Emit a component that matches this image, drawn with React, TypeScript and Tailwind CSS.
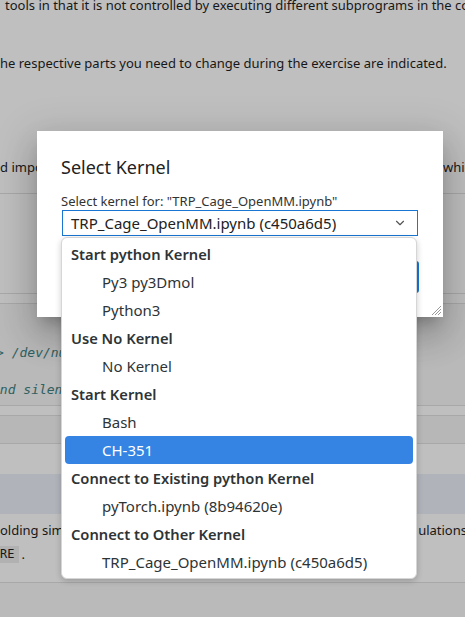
import { ChevronDown } from 'lucide-react';

interface KernelRow {
  label: string;
  header?: boolean;
  active?: boolean;
}

const rows: KernelRow[] = [
  { label: 'Start python Kernel', header: true },
  { label: 'Py3 py3Dmol' },
  { label: 'Python3' },
  { label: 'Use No Kernel', header: true },
  { label: 'No Kernel' },
  { label: 'Start Kernel', header: true },
  { label: 'Bash' },
  { label: 'CH-351', active: true },
  { label: 'Connect to Existing python Kernel', header: true },
  { label: 'pyTorch.ipynb (8b94620e)' },
  { label: 'Connect to Other Kernel', header: true },
  { label: 'TRP_Cage_OpenMM.ipynb (c450a6d5)' },
];

function NotebookBackdrop() {
  return (
    <div className="flex flex-col text-[13px] leading-[20px] text-[#1f1f1f]">
      {/* markdown cell */}
      <div className="h-[194px] shrink-0 border-b border-[#e0e0e0] bg-white">
        <p className="-mt-[5px] whitespace-nowrap pl-[5px]">
          tools in that it is not controlled by executing different subprograms in the command line
        </p>
        <p className="mt-[38px] whitespace-nowrap">
          he respective parts you need to change during the exercise are indicated.
        </p>
        <div className="mt-[84px] flex whitespace-nowrap">
          <span className="w-[37px] overflow-hidden">d important</span>
          <span className="ml-auto w-[22px] overflow-hidden">which</span>
        </div>
      </div>

      <div className="h-[100px] shrink-0 border-b border-[#e0e0e0] bg-white" />
      <div className="h-[10px] shrink-0 border-b border-[#e0e0e0] bg-white" />

      {/* code cell */}
      <div className="h-[102px] shrink-0 border-b border-[#e0e0e0] bg-[#f7f7f7] font-['DejaVu_Sans_Mono',monospace] text-[13px] leading-[17px] italic text-[#408080]">
        <p className="-ml-[4px] mt-[40px] w-[65px] overflow-hidden whitespace-nowrap">&gt; /dev/null</p>
        <p className="-ml-[8px] mt-[20px] w-[69px] overflow-hidden whitespace-nowrap">and silently</p>
      </div>

      <div className="h-[10px] shrink-0 border-b border-[#e0e0e0] bg-white" />
      <div className="h-[28px] shrink-0 border-b border-[#e0e0e0] bg-[#f5f5f5]" />
      <div className="h-[30px] shrink-0 bg-white" />
      <div className="h-[40px] shrink-0 bg-[#ebeff8]" />

      {/* markdown cell */}
      <div className="h-[69px] shrink-0 border-b border-[#e0e0e0] bg-white">
        <div className="mt-[6px] flex whitespace-nowrap">
          <span className="w-[61px] overflow-hidden">olding simulations</span>
          <span className="-mr-[2px] ml-auto">ulations</span>
        </div>
        <p className="mt-[4px] flex items-center whitespace-nowrap">
          <code className="bg-[#ececec] pr-[5px] font-['DejaVu_Sans_Mono',monospace] text-[12px] leading-[17px]">
            RE
          </code>
          <span className="ml-[2px]">.</span>
        </p>
      </div>
      <div className="h-[40px] shrink-0 bg-[#f8f8f8]" />
    </div>
  );
}

function KernelDialog() {
  return (
    <div className="absolute left-[37px] top-[131px] w-[406px] bg-white px-[24px] pb-[24px] pt-[24px] text-[#222] shadow-[0_10px_13px_-6px_rgba(0,0,0,0.2),0_20px_31px_3px_rgba(0,0,0,0.14),0_8px_38px_7px_rgba(0,0,0,0.12)]">
      <h2 className="text-[18px] leading-[24px] font-normal">Select Kernel</h2>
      <label className="mt-[13px] block text-[13px] leading-[18px] text-[#333]">
        Select kernel for: "TRP_Cage_OpenMM.ipynb"
      </label>
      <div className="ml-px flex h-[26px] w-[356px] items-center border border-[#1976d2] pl-[8px] pr-[10px]">
        <span className="flex-1 text-[15px] leading-[24px] text-[#222]">
          TRP_Cage_OpenMM.ipynb (c450a6d5)
        </span>
        <ChevronDown className="h-[14px] w-[14px] text-[#555]" strokeWidth={2} />
      </div>
      <div className="mt-[25px] flex justify-end gap-[12px]">
        <button className="h-[32px] w-[80px] rounded-[3px] bg-[#757575] text-[13px] text-white">Cancel</button>
        <button className="h-[32px] w-[80px] rounded-[3px] bg-[#1976d2] text-[13px] text-white">Select</button>
      </div>
      {/* resize grip */}
      <svg className="absolute bottom-[1px] right-[1px]" width="11" height="11" viewBox="0 0 11 11">
        <path d="M10 1 L1 10 M10 4 L4 10 M10 7 L7 10" stroke="#9a9a9a" strokeWidth="1" />
      </svg>
    </div>
  );
}

function KernelMenu() {
  return (
    <div className="absolute left-[61px] top-[237px] w-[356px] rounded-[6px] border border-[#d6d6d6] bg-white py-[2px] shadow-[0_2px_6px_rgba(0,0,0,0.2)]">
      {rows.map((row) => (
        <div
          key={row.label}
          className={
            row.active
              ? 'mx-[3px] h-[28px] rounded-[4px] bg-[#3584e4] pl-[37px] text-[15px] leading-[28px] text-white'
              : row.header
                ? 'mx-[3px] h-[28px] pl-[6px] text-[14.7px] leading-[28px] font-semibold text-[#2e3436]'
                : 'mx-[3px] h-[28px] pl-[37px] text-[15px] leading-[28px] text-[#2e3436]'
          }
        >
          {row.label}
        </div>
      ))}
    </div>
  );
}

export default function App() {
  return (
    <div className="relative h-[617px] w-[465px] overflow-hidden bg-white font-['Noto_Sans',sans-serif]">
      <NotebookBackdrop />
      <div className="absolute inset-0 bg-black/25" />
      <KernelDialog />
      <KernelMenu />
    </div>
  );
}
